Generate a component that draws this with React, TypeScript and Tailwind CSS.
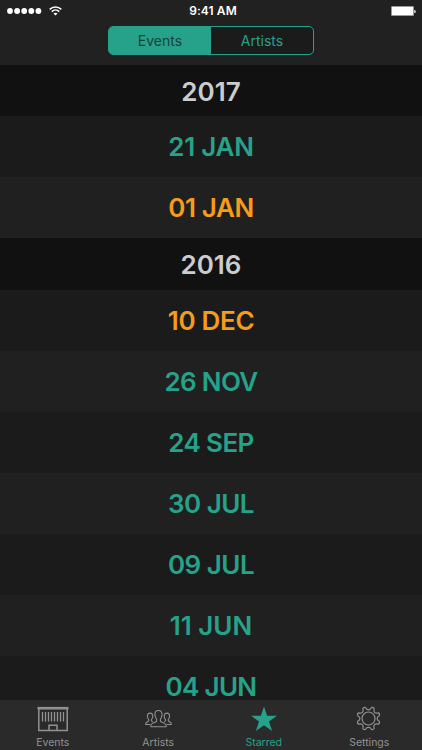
import { useState } from 'react';

const sections = [
  {
    year: '2017',
    days: [
      { label: '21 JAN', color: 'text-[#27a28a]', bg: 'bg-[#1b1b1b]', spacing: 'tracking-[-0.25px]' },
      { label: '01 JAN', color: 'text-[#f59c1c]', bg: 'bg-[#202020]', spacing: 'tracking-[-0.4px]' },
    ],
  },
  {
    year: '2016',
    days: [
      { label: '10 DEC', color: 'text-[#f59c1c]', bg: 'bg-[#1b1b1b]', spacing: 'tracking-[-0.3px]' },
      { label: '26 NOV', color: 'text-[#27a28a]', bg: 'bg-[#202020]', spacing: 'tracking-[-0.7px]' },
      { label: '24 SEP', color: 'text-[#27a28a]', bg: 'bg-[#1b1b1b]', spacing: 'tracking-[-0.6px]' },
      { label: '30 JUL', color: 'text-[#27a28a]', bg: 'bg-[#202020]', spacing: 'tracking-[-0.5px]' },
      { label: '09 JUL', color: 'text-[#27a28a]', bg: 'bg-[#1b1b1b]', spacing: 'tracking-[-0.5px]' },
      { label: '11 JUN', color: 'text-[#27a28a]', bg: 'bg-[#202020]', spacing: 'tracking-normal' },
      { label: '04 JUN', color: 'text-[#27a28a]', bg: 'bg-[#1b1b1b]', spacing: 'tracking-[-0.7px]' },
    ],
  },
];

// outline of an eight-toothed cog centred on 0,0
const gearPath = () => {
  const pt = (deg: number, r: number) => {
    const a = (deg * Math.PI) / 180;
    return `${(Math.cos(a) * r).toFixed(2)} ${(Math.sin(a) * r).toFixed(2)}`;
  };
  let d = `M${pt(15.5, 11.4)}`;
  for (let i = 0; i < 8; i++) {
    const a = 22.5 + i * 45;
    d += `Q${pt(a, 12.4)} ${pt(a + 7, 11.4)}C${pt(a + 13, 7.9)} ${pt(a + 32, 7.9)} ${pt(a + 38, 11.4)}`;
  }
  return d + 'Z';
};

const VenueIcon = () => (
  <svg width="32" height="26" viewBox="0 0 32 26" fill="none" stroke="currentColor">
    <path d="M.5 2.2H31.5" strokeWidth="2.6" />
    <path d="M1.8 3V24.4H30.2V3" strokeWidth="1.5" />
    <path d="M5.5 6V15.5M8.5 6V15.5M11.5 6V15.5M14.5 6V15.5M17.5 6V15.5M20.5 6V15.5M23.5 6V15.5M26.5 6V15.5" strokeWidth="1.3" />
    <path d="M12 24V19.3H20V24" strokeWidth="1.5" />
  </svg>
);

const PeopleIcon = () => (
  <svg width="27" height="20" viewBox="0 0 28 20" fill="none" stroke="currentColor" strokeWidth="1.1" strokeLinejoin="round">
    <path d="M14 1.2C11.6 1.2 10.3 2.8 10.3 5.2C10.3 7.6 11.2 9.2 12 10.2V12.4C11.5 13.6 6.4 14 6.1 16.2V18.1H21.9V16.2C21.6 14 16.5 13.6 16 12.4V10.2C16.8 9.2 17.7 7.6 17.7 5.2C17.7 2.8 16.4 1.2 14 1.2Z" />
    <path d="M8.1 13.2C7.4 12.8 6.8 12.3 6.7 11.6V10.6C7.5 9.9 8.1 8.6 8.1 7C8.1 5 7 3.9 5.3 3.9S2.5 5 2.5 7C2.5 8.6 3.1 9.9 3.9 10.6V11.6C3.7 12.8 1 13 .8 14.7V15.8H5.4" />
    <path d="M19.9 13.2C20.6 12.8 21.2 12.3 21.3 11.6V10.6C20.5 9.9 19.9 8.6 19.9 7C19.9 5 21 3.9 22.7 3.9S25.5 5 25.5 7C25.5 8.6 24.9 9.9 24.1 10.6V11.6C24.3 12.8 27 13 27.2 14.7V15.8H22.6" />
  </svg>
);

const StarIcon = () => (
  <svg width="28" height="26" viewBox="0 0 28 26" fill="currentColor">
    <path d="M14 .5L17.1 9.8H27L19 15.5L22.1 25L14 19.2L5.9 25L9 15.5L1 9.8H10.9Z" />
  </svg>
);

const GearIcon = () => (
  <svg width="26" height="26" viewBox="-12.5 -12.5 26 26" fill="none" stroke="currentColor">
    <path d={gearPath()} strokeWidth="1.2" />
    <circle r="6.5" strokeWidth="1.2" />
  </svg>
);

const tabs = [
  { name: 'Events', Icon: VenueIcon },
  { name: 'Artists', Icon: PeopleIcon },
  { name: 'Starred', Icon: StarIcon },
  { name: 'Settings', Icon: GearIcon },
];

const StatusBar = () => (
  <div className="grid h-[22px] grid-cols-3 items-center text-white">
    <div className="flex items-center pl-[7px]">
      <svg width="35" height="6" viewBox="0 0 35 6" fill="currentColor">
        <circle cx="3" cy="3" r="2.9" />
        <circle cx="10.1" cy="3" r="2.9" />
        <circle cx="17.2" cy="3" r="2.9" />
        <circle cx="24.3" cy="3" r="2.9" />
        <circle cx="31.4" cy="3" r="2.9" />
      </svg>
      <svg className="ml-[7px]" width="13" height="10" viewBox="0 0 13 10" fill="none" stroke="currentColor">
        <path d="M.7 3.4C4 .1 9 .1 12.3 3.4" strokeWidth="1.5" />
        <path d="M2.8 5.6C4.9 3.5 8.1 3.5 10.2 5.6" strokeWidth="1.5" />
        <path d="M6.5 9.6L4.5 7.5C5.6 6.5 7.4 6.5 8.5 7.5Z" fill="currentColor" stroke="none" />
      </svg>
    </div>
    <div className="pl-[4px] text-center text-[12px] leading-none font-semibold tracking-[0.1px]">9:41 AM</div>
    <div className="flex items-center justify-end pr-[6px]">
      <div className="h-[10px] w-[23px] rounded-[1px] border border-[#9a9a9a] bg-white"></div>
      <div className="h-[3px] w-[2px] rounded-r-full bg-[#bbbbbb]"></div>
    </div>
  </div>
);

const App = () => {
  const [segment, setSegment] = useState('Events');
  const [tab, setTab] = useState('Starred');

  return (
    <div className="flex h-[750px] w-[422px] flex-col overflow-hidden bg-[#1b1b1b] font-['Inter',sans-serif]">
      <div className="h-[65px] shrink-0 bg-[#212121]">
        <StatusBar />
        <div className="mx-auto mt-[4px] flex h-[29px] w-[206px] overflow-hidden rounded-[5px] border border-[#27a28a] bg-[#1b1b1b]">
          {['Events', 'Artists'].map((name) => (
            <button
              key={name}
              className={`flex-1 pt-px text-[14px] leading-none ${segment === name ? 'bg-[#27a28a] text-[#17423a]' : 'text-[#27a28a]'}`}
              onClick={() => setSegment(name)}
            >
              {name}
            </button>
          ))}
        </div>
      </div>

      <div className="min-h-0 flex-1 overflow-hidden">
        {sections.map((section) => (
          <div key={section.year}>
            <div className="flex h-[51.3px] items-center justify-center bg-[#111111] pt-[2px] text-[26px] leading-[24px] font-semibold text-[#cccccc]">
              {section.year}
            </div>
            {section.days.map((day) => (
              <div
                key={day.label}
                className={`flex h-[61px] items-center justify-center pt-px text-[26px] leading-[24px] font-semibold ${day.spacing} ${day.color} ${day.bg}`}
              >
                {day.label}
              </div>
            ))}
          </div>
        ))}
      </div>

      <div className="grid h-[50px] shrink-0 grid-cols-4 bg-[#2a2a2a]">
        {tabs.map(({ name, Icon }) => (
          <button
            key={name}
            className={`flex flex-col items-center ${tab === name ? 'text-[#27a28a]' : 'text-[#929292]'}`}
            onClick={() => setTab(name)}
          >
            <span className="mt-[6px] flex h-[26px] items-center">
              <Icon />
            </span>
            <span className="mt-[5px] text-[10.5px] leading-[12px]">{name}</span>
          </button>
        ))}
      </div>
    </div>
  );
};

export default App;
